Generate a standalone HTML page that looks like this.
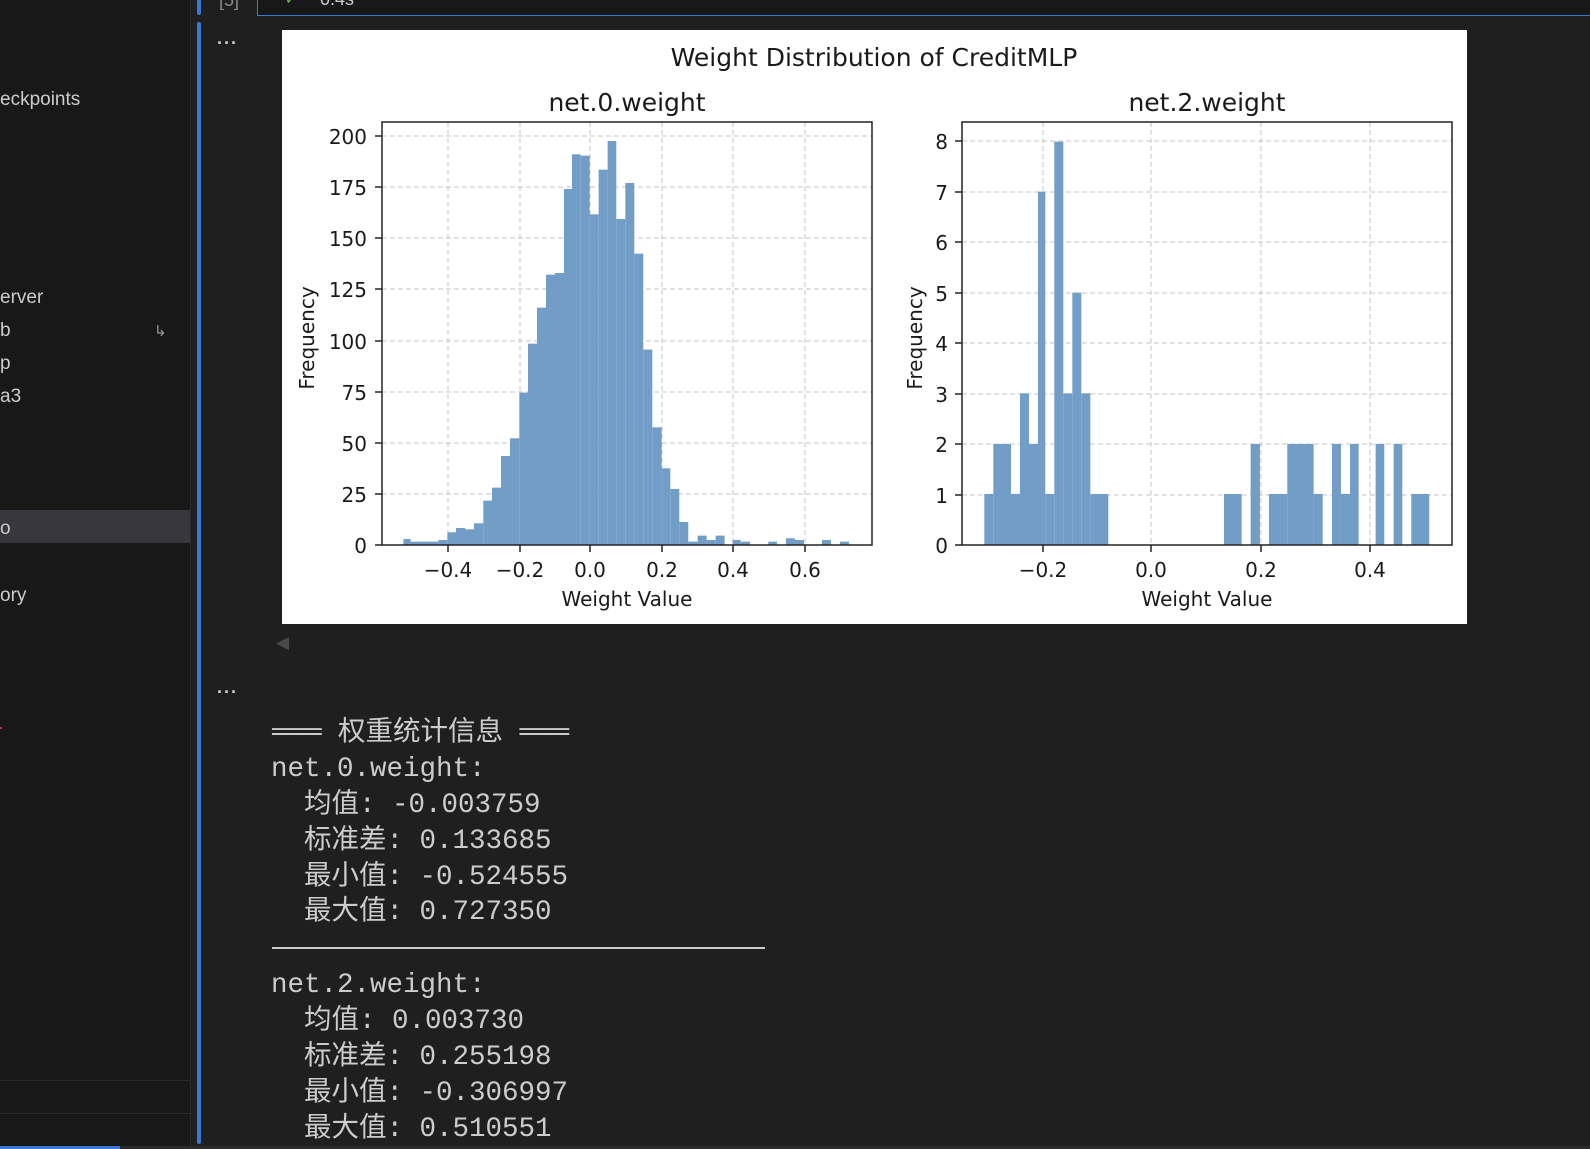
<!DOCTYPE html>
<html><head><meta charset="utf-8"><style>
html,body{margin:0;padding:0;}
body{width:1590px;height:1149px;background:#1f1f1f;position:relative;overflow:hidden;font-family:"Liberation Sans",sans-serif;}
.sb{position:absolute;left:0;top:0;width:190px;height:1149px;background:#181818;border-right:1px solid #2b2b2b;}
.si{position:absolute;left:0;color:#cccccc;font-size:19px;line-height:20px;white-space:nowrap;}
.mono{position:absolute;font-family:"Liberation Mono","DejaVu Sans Mono","Noto Sans CJK SC",monospace;font-size:27.5px;color:#cccccc;white-space:pre;line-height:36px;}
</style></head><body>
<div class="sb">
  <div class="si" style="top:90px;">eckpoints</div>
  <div class="si" style="top:288px;">erver</div>
  <div class="si" style="top:321px;">b</div>
  <div style="position:absolute;left:154px;top:322px;color:#9a9a9a;font-size:15px;font-family:'DejaVu Sans',sans-serif;">↳</div>
  <div class="si" style="top:354px;">p</div>
  <div class="si" style="top:387px;">a3</div>
  <div style="position:absolute;left:0;top:510px;width:190px;height:33px;background:#37373d;"></div>
  <div class="si" style="top:519px;">o</div>
  <div class="si" style="top:586px;">ory</div>
  <div style="position:absolute;left:0;top:727px;width:2px;height:2px;background:#c03030;"></div>
  <div style="position:absolute;left:0;top:1080px;width:190px;height:1px;background:#2b2b2b;"></div>
  <div style="position:absolute;left:0;top:1113px;width:190px;height:1px;background:#2b2b2b;"></div>
</div>
<div style="position:absolute;left:0;top:1146px;width:120px;height:3px;background:#3b78d6;"></div>
<div style="position:absolute;left:120px;top:1146px;width:1470px;height:3px;background:#2b2b2b;"></div>
<div style="position:absolute;left:197px;top:0;width:4px;height:15px;background:#3b78d6;border-radius:0 0 2px 2px;"></div>
<div style="position:absolute;left:197px;top:22px;width:4px;height:1122px;background:#3b78d6;border-radius:2px;"></div>
<div style="position:absolute;left:257px;top:-2px;width:1333px;height:16px;background:#181818;border:1px solid #3b78d6;"></div>
<div style="position:absolute;left:219px;top:-10px;color:#8a8a8a;font-size:18px;">[5]</div>
<div style="position:absolute;left:285px;top:-9px;color:#6cc04a;font-size:14px;">✓</div>
<div style="position:absolute;left:320px;top:-11px;color:#cccccc;font-size:18px;">0.4s</div>
<div style="position:absolute;left:217px;top:33px;color:#cccccc;font-size:18px;font-weight:bold;letter-spacing:1px;">···</div>
<div style="position:absolute;left:217px;top:682px;color:#cccccc;font-size:18px;font-weight:bold;letter-spacing:1px;">···</div>
<div style="position:absolute;left:276px;top:633px;color:#4a4a4a;font-size:17px;">◀</div>

<svg style="position:absolute;left:0;top:0" width="1590" height="1149" xmlns="http://www.w3.org/2000/svg" font-family="DejaVu Sans, sans-serif">
<rect x="282" y="30" width="1185" height="594" fill="#fff"/>
<text x="874" y="66" font-size="25" text-anchor="middle" fill="#1a1a1a">Weight Distribution of CreditMLP</text>
<text x="627" y="111" font-size="25" text-anchor="middle" fill="#1a1a1a">net.0.weight</text>
<text x="1207" y="111" font-size="25" text-anchor="middle" fill="#1a1a1a">net.2.weight</text>
<g stroke="#c4c4c4" stroke-width="1" stroke-dasharray="5,3">
<line x1="448" y1="122" x2="448" y2="545"/><line x1="520" y1="122" x2="520" y2="545"/><line x1="590" y1="122" x2="590" y2="545"/><line x1="662" y1="122" x2="662" y2="545"/><line x1="733" y1="122" x2="733" y2="545"/><line x1="805" y1="122" x2="805" y2="545"/>
<line x1="382" y1="136" x2="872" y2="136"/><line x1="382" y1="187" x2="872" y2="187"/><line x1="382" y1="238" x2="872" y2="238"/><line x1="382" y1="289" x2="872" y2="289"/><line x1="382" y1="341" x2="872" y2="341"/><line x1="382" y1="392" x2="872" y2="392"/><line x1="382" y1="443" x2="872" y2="443"/><line x1="382" y1="494" x2="872" y2="494"/>
</g>
<g transform="translate(370,120) scale(0.3333)" fill="#729dc6">
<rect x="100" y="1257" width="22" height="18"/><rect x="122" y="1265" width="83" height="10"/><rect x="205" y="1260" width="27" height="15"/><rect x="232" y="1237" width="26" height="38"/><rect x="258" y="1224" width="27" height="51"/><rect x="285" y="1228" width="27" height="47"/><rect x="312" y="1210" width="28" height="65"/><rect x="340" y="1142" width="26" height="133"/><rect x="366" y="1103" width="27" height="172"/><rect x="393" y="1008" width="27" height="267"/><rect x="420" y="955" width="28" height="320"/><rect x="448" y="818" width="26" height="457"/><rect x="474" y="671" width="27" height="604"/><rect x="501" y="563" width="27" height="712"/><rect x="528" y="464" width="27" height="811"/><rect x="555" y="459" width="27" height="816"/><rect x="582" y="207" width="24" height="1068"/><rect x="606" y="103" width="26" height="1172"/><rect x="632" y="107" width="27" height="1168"/><rect x="659" y="283" width="27" height="992"/><rect x="686" y="149" width="27" height="1126"/><rect x="713" y="63" width="26" height="1212"/><rect x="739" y="297" width="27" height="978"/><rect x="766" y="189" width="27" height="1086"/><rect x="793" y="401" width="27" height="874"/><rect x="820" y="689" width="27" height="586"/><rect x="847" y="922" width="28" height="353"/><rect x="875" y="1045" width="26" height="230"/><rect x="901" y="1107" width="27" height="168"/><rect x="928" y="1206" width="27" height="69"/><rect x="955" y="1265" width="28" height="10"/><rect x="983" y="1247" width="27" height="28"/><rect x="1010" y="1260" width="27" height="15"/><rect x="1037" y="1247" width="27" height="28"/><rect x="1088" y="1260" width="24" height="15"/><rect x="1112" y="1265" width="28" height="10"/><rect x="1195" y="1265" width="26" height="10"/><rect x="1248" y="1255" width="27" height="20"/><rect x="1275" y="1260" width="27" height="15"/><rect x="1356" y="1260" width="27" height="15"/><rect x="1410" y="1265" width="27" height="10"/>
</g>
<rect x="382" y="122" width="490" height="423" fill="none" stroke="#222" stroke-width="1.5"/>
<g stroke="#222" stroke-width="1.5">
<line x1="448" y1="545" x2="448" y2="552"/><line x1="520" y1="545" x2="520" y2="552"/><line x1="590" y1="545" x2="590" y2="552"/><line x1="662" y1="545" x2="662" y2="552"/><line x1="733" y1="545" x2="733" y2="552"/><line x1="805" y1="545" x2="805" y2="552"/>
<line x1="375" y1="136" x2="382" y2="136"/><line x1="375" y1="187" x2="382" y2="187"/><line x1="375" y1="238" x2="382" y2="238"/><line x1="375" y1="289" x2="382" y2="289"/><line x1="375" y1="341" x2="382" y2="341"/><line x1="375" y1="392" x2="382" y2="392"/><line x1="375" y1="443" x2="382" y2="443"/><line x1="375" y1="494" x2="382" y2="494"/><line x1="375" y1="545" x2="382" y2="545"/>
</g>
<g font-size="20" fill="#1a1a1a" text-anchor="end">
<text x="367" y="144">200</text><text x="367" y="195">175</text><text x="367" y="246">150</text><text x="367" y="297">125</text><text x="367" y="349">100</text><text x="367" y="400">75</text><text x="367" y="451">50</text><text x="367" y="502">25</text><text x="367" y="553">0</text>
</g>
<g font-size="20" fill="#1a1a1a" text-anchor="middle">
<text x="448" y="577">−0.4</text><text x="520" y="577">−0.2</text><text x="590" y="577">0.0</text><text x="662" y="577">0.2</text><text x="733" y="577">0.4</text><text x="805" y="577">0.6</text>
<text x="627" y="606">Weight Value</text>
<text transform="translate(314,338) rotate(-90)">Frequency</text>
</g>
<g stroke="#c4c4c4" stroke-width="1" stroke-dasharray="5,3">
<line x1="1043" y1="122" x2="1043" y2="545"/><line x1="1151" y1="122" x2="1151" y2="545"/><line x1="1261" y1="122" x2="1261" y2="545"/><line x1="1370" y1="122" x2="1370" y2="545"/>
<line x1="962" y1="141" x2="1452" y2="141"/><line x1="962" y1="192" x2="1452" y2="192"/><line x1="962" y1="242" x2="1452" y2="242"/><line x1="962" y1="293" x2="1452" y2="293"/><line x1="962" y1="343" x2="1452" y2="343"/><line x1="962" y1="394" x2="1452" y2="394"/><line x1="962" y1="444" x2="1452" y2="444"/><line x1="962" y1="495" x2="1452" y2="495"/>
</g>
<g transform="translate(940,120) scale(0.3333)" fill="#729dc6">
<rect x="133" y="1122" width="27" height="153"/><rect x="160" y="972" width="53" height="303"/><rect x="213" y="1122" width="27" height="153"/><rect x="240" y="820" width="27" height="455"/><rect x="267" y="972" width="27" height="303"/><rect x="294" y="215" width="22" height="1060"/><rect x="316" y="1122" width="27" height="153"/><rect x="343" y="65" width="27" height="1210"/><rect x="370" y="820" width="27" height="455"/><rect x="397" y="518" width="27" height="757"/><rect x="424" y="820" width="27" height="455"/><rect x="451" y="1122" width="54" height="153"/><rect x="852" y="1122" width="53" height="153"/><rect x="932" y="972" width="28" height="303"/><rect x="987" y="1122" width="55" height="153"/><rect x="1042" y="972" width="79" height="303"/><rect x="1121" y="1122" width="27" height="153"/><rect x="1176" y="972" width="27" height="303"/><rect x="1203" y="1122" width="27" height="153"/><rect x="1230" y="972" width="26" height="303"/><rect x="1307" y="972" width="26" height="303"/><rect x="1361" y="972" width="26" height="303"/><rect x="1414" y="1122" width="54" height="153"/>
</g>
<rect x="962" y="122" width="490" height="423" fill="none" stroke="#222" stroke-width="1.5"/>
<g stroke="#222" stroke-width="1.5">
<line x1="1043" y1="545" x2="1043" y2="552"/><line x1="1151" y1="545" x2="1151" y2="552"/><line x1="1261" y1="545" x2="1261" y2="552"/><line x1="1370" y1="545" x2="1370" y2="552"/>
<line x1="955" y1="141" x2="962" y2="141"/><line x1="955" y1="192" x2="962" y2="192"/><line x1="955" y1="242" x2="962" y2="242"/><line x1="955" y1="293" x2="962" y2="293"/><line x1="955" y1="343" x2="962" y2="343"/><line x1="955" y1="394" x2="962" y2="394"/><line x1="955" y1="444" x2="962" y2="444"/><line x1="955" y1="495" x2="962" y2="495"/><line x1="955" y1="545" x2="962" y2="545"/>
</g>
<g font-size="20" fill="#1a1a1a" text-anchor="end">
<text x="948" y="149">8</text><text x="948" y="200">7</text><text x="948" y="250">6</text><text x="948" y="301">5</text><text x="948" y="351">4</text><text x="948" y="402">3</text><text x="948" y="452">2</text><text x="948" y="503">1</text><text x="948" y="553">0</text>
</g>
<g font-size="20" fill="#1a1a1a" text-anchor="middle">
<text x="1043" y="577">−0.2</text><text x="1151" y="577">0.0</text><text x="1261" y="577">0.2</text><text x="1370" y="577">0.4</text>
<text x="1207" y="606">Weight Value</text>
<text transform="translate(922,338) rotate(-90)">Frequency</text>
</g>
</svg>

<div class="mono" style="left:272px;top:716px;">═══ 权重统计信息 ═══</div>
<div class="mono" style="left:271px;top:752px;">net.0.weight:</div>
<div class="mono" style="left:304px;top:788px;">均值: -0.003759</div>
<div class="mono" style="left:304px;top:824px;">标准差: 0.133685</div>
<div class="mono" style="left:304px;top:860px;">最小值: -0.524555</div>
<div class="mono" style="left:304px;top:895px;">最大值: 0.727350</div>
<div style="position:absolute;left:272px;top:947px;width:493px;height:2px;background:#cccccc;"></div>
<div class="mono" style="left:271px;top:968px;">net.2.weight:</div>
<div class="mono" style="left:304px;top:1004px;">均值: 0.003730</div>
<div class="mono" style="left:304px;top:1040px;">标准差: 0.255198</div>
<div class="mono" style="left:304px;top:1076px;">最小值: -0.306997</div>
<div class="mono" style="left:304px;top:1112px;">最大值: 0.510551</div>
</body></html>
